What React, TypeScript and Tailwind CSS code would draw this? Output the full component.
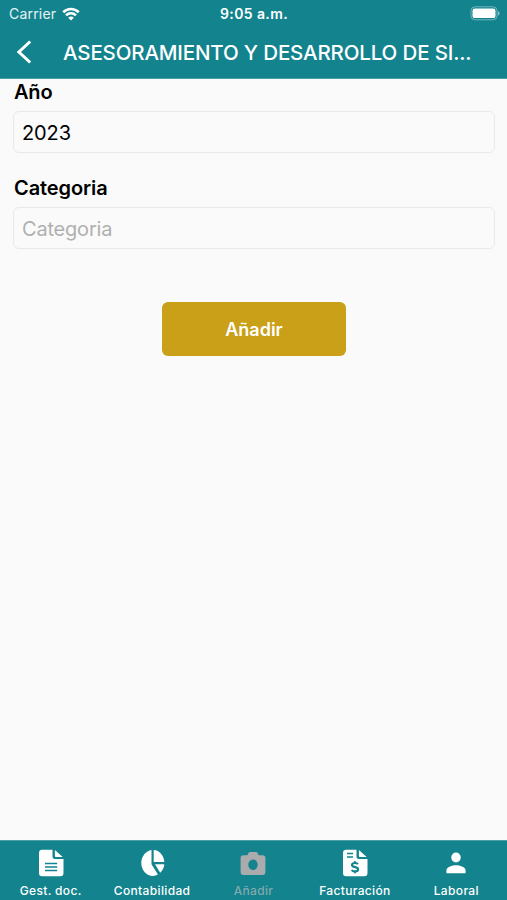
import type { ReactNode } from 'react'

type Tab = {
  label: string
  icon: ReactNode
  active?: boolean
}

const DocumentIcon = () => (
  <svg width="26" height="28" viewBox="0 0 26 28" fill="none">
    <path
      d="M4.200 .8h10.300v6.900a2.200 2.200 0 0 0 2.200 2.200h8.800V24a3.200 3.200 0 0 1-3.200 3.200H4.200A3.200 3.200 0 0 1 1 24V4A3.200 3.200 0 0 1 4.200 .8Z"
      fill="white"
    />
    <path d="M16.900 1 24.700 7.900h-6.800a1 1 0 0 1-1-1Z" fill="white" />
    <path d="M7 14.600h12.200M7 18.100h12.200M7 21.600h12.200" stroke="#13838e" strokeWidth="1.500" />
  </svg>
)

const PieIcon = () => (
  <svg className="ml-px" width="26" height="28" viewBox="0 0 26 28" fill="white">
    <path d="M11.500 1v14.300l6.400 10.300A12 13 0 0 1 13 27C6.500 27 1.300 21.200 1.300 14 1.300 7.300 6 1.700 11.500 1Z" />
    <path d="M13.700 1C19.500 1.300 23.900 6.500 24.300 12.900H13.700Z" />
    <path d="M15 15.300h9.300a13 13 0 0 1-4.100 8.400Z" />
  </svg>
)

const CameraIcon = () => (
  <svg width="26" height="28" viewBox="0 0 26 28">
    <path
      fillRule="evenodd"
      d="m7.400 6.200.9-2A2.300 2.300 0 0 1 10.400 3h5.200a2.300 2.300 0 0 1 2.100 1.200l.9 2h4A2.800 2.800 0 0 1 25.400 9v14.100a2.900 2.900 0 0 1-2.900 2.900h-19A2.900 2.900 0 0 1 .6 23.100V9a2.800 2.800 0 0 1 2.800-2.800ZM13 10.500a4.700 5.200 0 1 0 0 10.400A4.700 5.200 0 0 0 13 10.500Z"
      fill="#a9abad"
    />
  </svg>
)

const InvoiceIcon = () => (
  <svg width="26" height="28" viewBox="0 0 26 28" fill="none">
    <path
      d="M4.200 .8h10.300v6.900a2.200 2.200 0 0 0 2.200 2.200h8.800V24a3.200 3.200 0 0 1-3.200 3.200H4.200A3.200 3.200 0 0 1 1 24V4A3.200 3.200 0 0 1 4.200 .8Z"
      fill="white"
    />
    <path d="M16.900 1 24.700 7.900h-6.800a1 1 0 0 1-1-1Z" fill="white" />
    <path d="M5 4.600h6M5 8.100h6" stroke="#13838e" strokeWidth="1.500" />
    <path
      d="M15.900 15.200c-.5-.8-1.500-1.200-2.900-1.200-1.800 0-3 .8-3 2 0 3 6.100 1.200 6.100 4.200 0 1.400-1.300 2.200-3.100 2.200-1.600 0-2.800-.6-3.200-1.600M13 12.200V14M13 22.400v1.800"
      stroke="#13838e"
      strokeWidth="2.100"
    />
  </svg>
)

const PersonIcon = () => (
  <svg width="26" height="28" viewBox="0 0 26 28" fill="white">
    <ellipse cx="13" cy="8.500" rx="4.700" ry="4.900" />
    <path d="M3.400 24.200v-2.800c0-3.700 6.200-5.200 9.600-5.200s9.600 1.500 9.600 5.200v2.800Z" />
  </svg>
)

const tabs: Tab[] = [
  { label: 'Gest. doc.', icon: <DocumentIcon /> },
  { label: 'Contabilidad', icon: <PieIcon /> },
  { label: 'Añadir', icon: <CameraIcon />, active: true },
  { label: 'Facturación', icon: <InvoiceIcon /> },
  { label: 'Laboral', icon: <PersonIcon /> },
]

function StatusBar() {
  return (
    <div className="grid h-[27px] grid-cols-3 items-center pr-[7px] pl-[9px] text-white">
      <div className="flex items-center gap-[6px]">
        <span className="text-[14px] leading-none tracking-[0.2px] text-white/90">Carrier</span>
        <svg width="18" height="14" viewBox="0 0 19 15" fill="none" stroke="white" strokeWidth="2.800">
          <path d="M1.200 5.600a11.800 11.800 0 0 1 16.600 0" />
          <path d="M4.200 8.900a7.500 7.500 0 0 1 10.600 0" />
          <path d="M9.500 14.400 6.500 11.400a4.200 4.200 0 0 1 6 0Z" fill="white" stroke="none" />
        </svg>
      </div>
      <span className="-ml-px justify-self-center text-[14px] leading-none font-semibold tracking-[0.4px] whitespace-nowrap">
        9:05 a.m.
      </span>
      <svg className="justify-self-end" width="31" height="15" viewBox="0 0 31 15">
        <rect x="2" y=".8" width="26" height="13" rx="4" fill="none" stroke="white" strokeOpacity=".4" />
        <rect x="3.500" y="2.500" width="23" height="9.600" rx="2.200" fill="white" />
        <path d="M29 5v4.600c1-.4 1.500-1.300 1.500-2.300S30 5.400 29 5Z" fill="white" fillOpacity=".5" />
      </svg>
    </div>
  )
}

export default function App() {
  return (
    <div className="flex h-[900px] w-[507px] flex-col overflow-hidden bg-[#fafafa] font-['Inter',sans-serif]">
      <header className="h-[79px] shrink-0 border-b border-[#4a9fa7] bg-[#13838e]">
        <StatusBar />
        <div className="flex h-[50px] items-center text-white">
          <svg className="ml-[16px] shrink-0" width="16" height="24" viewBox="0 0 16 24" fill="none">
            <path d="M14.200 1.500 2.900 12l11.300 10.500" stroke="white" strokeWidth="3" />
          </svg>
          <h1 className="ml-[31px] pt-[2px] text-[20.5px] font-medium tracking-[-0.15px] whitespace-nowrap">
            ASESORAMIENTO Y DESARROLLO DE SI...
          </h1>
        </div>
      </header>

      <main className="flex grow flex-col pr-[12px] pl-[13px] text-[20px] text-black">
        <label className="h-[32px] pl-px leading-[26px] font-semibold tracking-[-0.2px]">Año</label>
        <div className="flex h-[42px] items-center rounded-[6px] border border-[#e9e9e9] px-[8px] pt-px tracking-[-0.1px]">
          2023
        </div>

        <label className="mt-[22px] h-[32px] pl-px leading-[26px] font-semibold tracking-[-0.1px]">Categoria</label>
        <div className="flex h-[42px] items-center rounded-[6px] border border-[#e9e9e9] px-[8px] pt-px tracking-[-0.2px] text-[#b0b0b0]">
          Categoria
        </div>

        <button className="mt-[53px] h-[54px] w-[184px] self-center rounded-[6px] bg-[#c9a017] text-[18px] font-semibold text-white">
          Añadir
        </button>
      </main>

      <nav className="grid h-[60px] shrink-0 grid-cols-5 border-t border-[#4a9fa7] bg-[#13838e]">
        {tabs.map((tab) => (
          <div key={tab.label} className="flex flex-col items-center pt-[8px]">
            {tab.icon}
            <span
              className={`mt-[6px] text-[12px] leading-[15px] font-medium tracking-[0.35px] whitespace-nowrap ${
                tab.active ? 'text-[#83a9ad]' : 'text-white'
              }`}
            >
              {tab.label}
            </span>
          </div>
        ))}
      </nav>
    </div>
  )
}
